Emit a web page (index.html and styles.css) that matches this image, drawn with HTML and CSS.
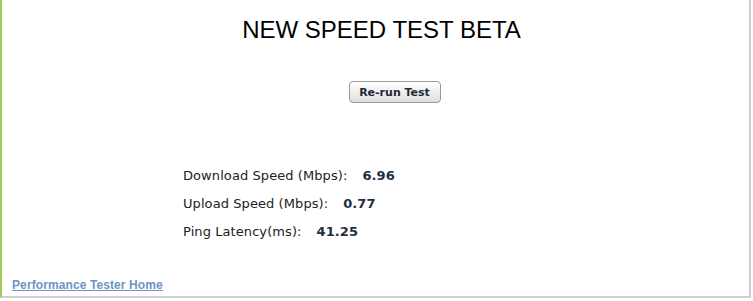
FILE: index.html
```html
<!DOCTYPE html>
<html>
<head>
<meta charset="utf-8">
<link rel="stylesheet" href="styles.css">
</head>
<body>
<div class="frame">
  <h1 class="title">NEW SPEED TEST BETA</h1>
  <div class="btn-row"><button class="btn">Re-run Test</button></div>
  <div class="results">
    <div class="row"><span class="label">Download Speed (Mbps):</span><span class="val">6.96</span></div>
    <div class="row"><span class="label">Upload Speed (Mbps):</span><span class="val">0.77</span></div>
    <div class="row"><span class="label">Ping Latency(ms):</span><span class="val">41.25</span></div>
  </div>
  <a class="home" href="#">Performance Tester Home</a>
</div>
</body>
</html>
```
FILE: styles.css
```css
html, body { margin: 0; padding: 0; background: #fff; }
.frame {
  width: 747px;
  height: 296px;
  border-left: 2px solid #9ccc5c;
  border-right: 2px solid #d0d0d0;
  border-bottom: 2px solid #d0d0d0;
  position: relative;
  box-sizing: content-box;
}
.title {
  margin: 0;
  padding-top: 16px;
  padding-left: 12px;
  text-align: center;
  font-family: "Liberation Sans", Arial, sans-serif;
  font-weight: normal;
  font-size: 24px;
  line-height: 28px;
  color: #000;
}
.btn-row {
  display: flex;
  justify-content: center;
  padding-left: 38px;
  margin-top: 37px;
}
.btn {
  width: 92px;
  height: 22px;
  border: 1px solid #9a9a9a;
  border-radius: 4px;
  background: linear-gradient(#ffffff, #ececec 60%, #dedede);
  font-family: "DejaVu Sans", Verdana, sans-serif;
  font-weight: bold;
  font-size: 11px;
  color: #1e2a38;
  padding: 0;
}
.results {
  margin-top: 59px;
  padding-left: 181px;
  font-family: "DejaVu Sans", Verdana, sans-serif;
  font-size: 13px;
  letter-spacing: 0.08px;
  color: #222;
}
.row { height: 28px; line-height: 28px; }
.label { margin-right: 15px; }
.val { font-weight: bold; color: #1e2f3f; }
.home {
  position: absolute;
  left: 10px;
  top: 278px;
  font-family: "Liberation Sans", Arial, sans-serif;
  font-weight: bold;
  font-size: 12px;
  letter-spacing: 0.1px;
  color: #6f93c2;
  text-decoration: underline;
}
```
